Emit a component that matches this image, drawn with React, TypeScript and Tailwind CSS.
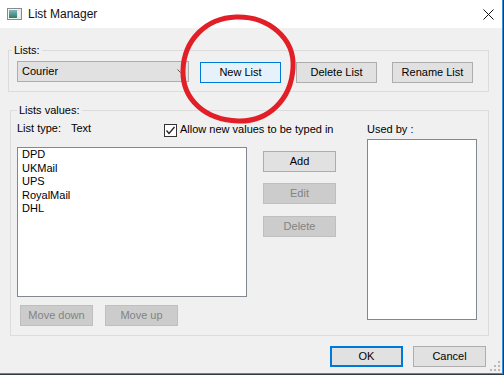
const btnBase = "h-[21px] w-[73px] border flex items-center justify-center text-[11px] leading-none";
const btnNormal = btnBase + " border-[#adadad] bg-[#e1e1e1] text-black";
const btnDisabled = btnBase + " border-[#bfbfbf] bg-[#cccccc] text-[#838383]";

function WindowIcon() {
    return (
        <svg width="15" height="12" viewBox="0 0 15 12">
            <defs>
                <linearGradient id="ig" x1="0" y1="0" x2="0" y2="1">
                    <stop offset="0" stopColor="#7fb8c0" />
                    <stop offset="1" stopColor="#2e7d62" />
                </linearGradient>
            </defs>
            <rect x="0.5" y="0.5" width="14" height="11" fill="#f4f4f4" stroke="#8a8a8a" />
            <rect x="2" y="2" width="8" height="8" fill="url(#ig)" />
            <rect x="11" y="2" width="2" height="8" fill="#ffffff" stroke="#c8c8c8" strokeWidth="0.5" />
        </svg>
    );
}

function CloseIcon() {
    return (
        <svg width="11" height="11" viewBox="0 0 11 11">
            <path d="M0.5 0.5 L10.5 10.5 M10.5 0.5 L0.5 10.5" stroke="#111" strokeWidth="1" />
        </svg>
    );
}

export default function App() {
    const values = ["DPD", "UKMail", "UPS", "RoyalMail", "DHL"];

    return (
        <div className="relative w-[504px] h-[375px] overflow-hidden bg-[#2f3a46] font-['Liberation_Sans',Arial,sans-serif] text-black">
            <div className="relative w-[503px] h-[374px] bg-[#f0f0f0] border-r border-b border-[#3b8fd9] flex flex-col">
                {/* title bar */}
                <div className="h-[28px] shrink-0 bg-white flex items-center">
                    <div className="ml-[7px] flex">
                        <WindowIcon />
                    </div>
                    <span className="ml-[6px] text-[12px] leading-none text-[#111]">List Manager</span>
                    <div className="ml-auto mr-[8px] flex">
                        <CloseIcon />
                    </div>
                </div>

                {/* Lists group */}
                <fieldset className="mt-[15px] ml-[8px] w-[481px] h-[49px] border border-[#dcdcdc] p-0 m-0 min-w-0">
                    <legend className="ml-[3px] px-[2px] text-[11px] leading-[14px]">Lists:</legend>
                    <div className="flex items-start pt-[4px] pl-[8px]">
                        <div className="w-[172px] h-[21px] border border-[#adadad] bg-[#e1e1e1] flex items-center pl-[4px] text-[11px]">
                            <span>Courier</span>
                            <svg className="ml-auto mr-[4px]" width="7" height="5" viewBox="0 0 7 5">
                                <path d="M0.5 0.5 L3.5 3.5 L6.5 0.5" fill="none" stroke="#555" strokeWidth="1" />
                            </svg>
                        </div>
                        <button className="ml-[11px] mt-[1px] h-[21px] w-[81px] border border-[#0078d7] bg-[#e5f1fb] flex items-center justify-center text-[11px] leading-none">
                            New List
                        </button>
                        <button className="ml-[15px] mt-[1px] h-[21px] w-[81px] border border-[#adadad] bg-[#e1e1e1] flex items-center justify-center text-[11px] leading-none">
                            Delete List
                        </button>
                        <button className="ml-[15px] mt-[1px] h-[21px] w-[81px] border border-[#adadad] bg-[#e1e1e1] flex items-center justify-center text-[11px] leading-none">
                            Rename List
                        </button>
                    </div>
                </fieldset>

                {/* Lists values group */}
                <fieldset className="mt-[11px] ml-[10px] w-[479px] h-[233px] border border-[#dcdcdc] p-0 m-0 min-w-0">
                    <legend className="ml-[6px] px-[2px] text-[11px] leading-[14px]">Lists values:</legend>
                    <div className="flex pl-[6px]">
                        <div className="w-[340px] flex flex-col">
                            <div className="mt-[4px] h-[14px] flex items-center text-[11px]">
                                <span className="w-[54px]">List type:</span>
                                <span className="w-[93px]">Text</span>
                                <span className="mt-[4px] w-[13px] h-[13px] border border-[#333] bg-white flex items-center justify-center">
                                    <svg width="11" height="11" viewBox="0 0 11 11">
                                        <path d="M1.5 5.5 L4 8.5 L9.5 2" fill="none" stroke="#222" strokeWidth="1.3" />
                                    </svg>
                                </span>
                                <span className="ml-[3px] mt-[2px]">Allow new values to be typed in</span>
                            </div>
                            <div className="mt-[12px] flex">
                                <div className="w-[230px] h-[150px] border border-[#828790] bg-white pl-[4px] text-[11px] leading-[13.5px]">
                                    {values.map((v) => (
                                        <div key={v}>{v}</div>
                                    ))}
                                </div>
                                <div className="ml-[16px] pt-[4px] flex flex-col">
                                    <button className={btnNormal}>Add</button>
                                    <button className={btnDisabled + " mt-[11px]"}>Edit</button>
                                    <button className={btnDisabled + " mt-[12px]"}>Delete</button>
                                </div>
                            </div>
                            <div className="mt-[8px] ml-[3px] flex">
                                <button className={btnDisabled}>Move down</button>
                                <button className={btnDisabled + " ml-[12px]"}>Move up</button>
                            </div>
                        </div>
                        <div className="ml-[10px] w-[110px] flex flex-col">
                            <span className="mt-[5px] h-[14px] text-[11px] leading-[14px]">Used by :</span>
                            <div className="mt-[3px] h-[181px] border border-[#828790] bg-white" />
                        </div>
                    </div>
                </fieldset>

                {/* dialog buttons */}
                <div className="mt-[10px] ml-[330px] flex">
                    <button className="h-[21px] w-[73px] border-2 border-[#0078d7] bg-[#e1e1e1] flex items-center justify-center text-[11px] leading-none">
                        OK
                    </button>
                    <button className={btnNormal + " ml-[10px]"}>Cancel</button>
                </div>

                {/* size grip */}
                <svg className="absolute right-[2px] bottom-[2px]" width="10" height="10" viewBox="0 0 10 10">
                    <rect x="8" y="0" width="2" height="2" fill="#b8b8b8" />
                    <rect x="4" y="4" width="2" height="2" fill="#b8b8b8" />
                    <rect x="8" y="4" width="2" height="2" fill="#b8b8b8" />
                    <rect x="0" y="8" width="2" height="2" fill="#b8b8b8" />
                    <rect x="4" y="8" width="2" height="2" fill="#b8b8b8" />
                    <rect x="8" y="8" width="2" height="2" fill="#b8b8b8" />
                </svg>
            </div>

            {/* red annotation circle */}
            <svg className="absolute left-0 top-0 pointer-events-none" width="504" height="375" viewBox="0 0 504 375">
                <path
                    d="M236 17 C268 16 295 38 293 68 C291 100 268 122 238 121 C206 120 182 100 183 70 C184 40 206 18 236 17 Z"
                    fill="none"
                    stroke="#e21f26"
                    strokeWidth="5"
                />
            </svg>
        </div>
    );
}
